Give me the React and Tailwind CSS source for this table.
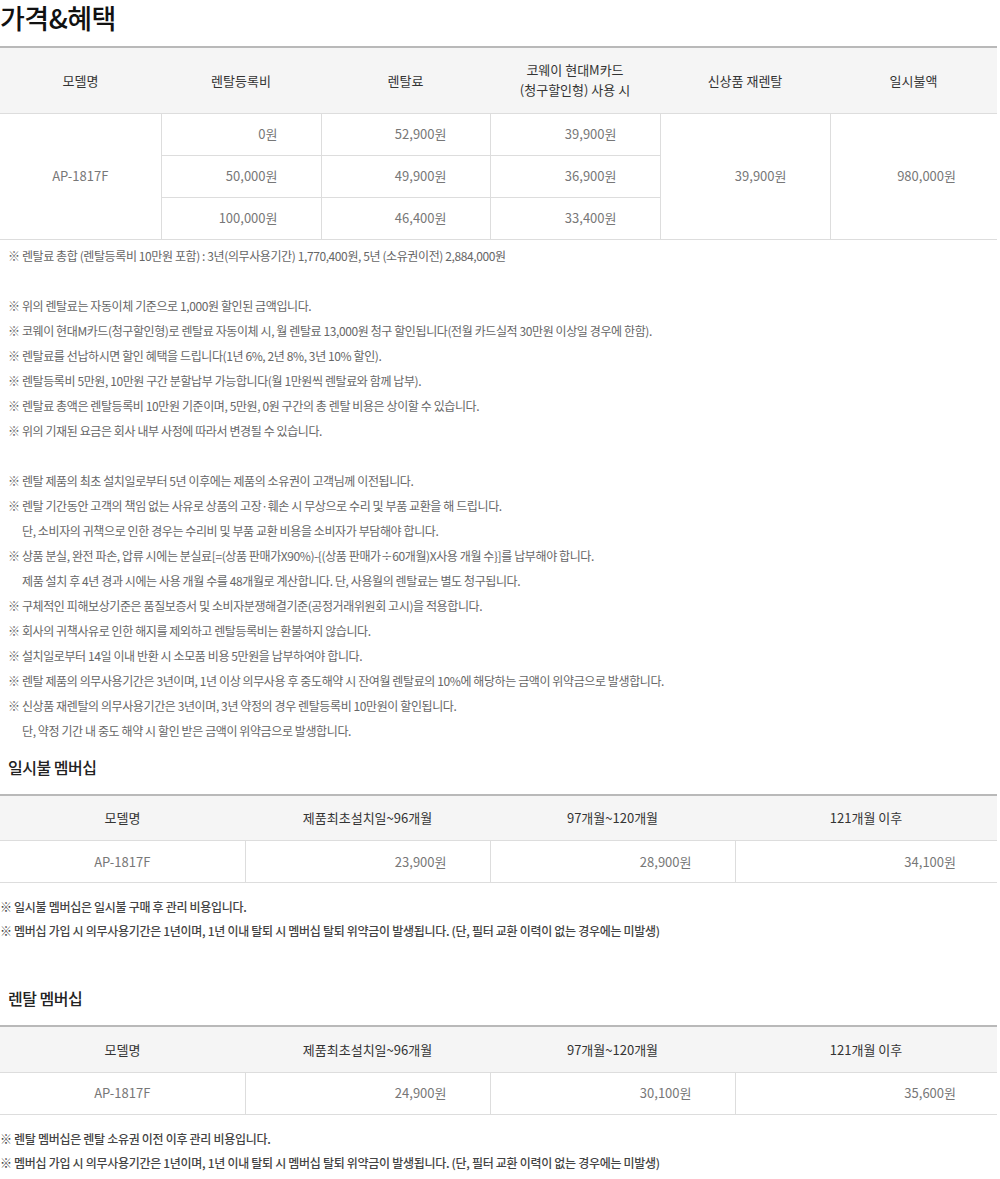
import React from "react";

const FONT = { fontFamily: '"Noto Sans CJK KR", "Noto Sans", sans-serif' };

const rentalRows = [
  { fee: "0원", rent: "52,900원", card: "39,900원" },
  { fee: "50,000원", rent: "49,900원", card: "36,900원" },
  { fee: "100,000원", rent: "46,400원", card: "33,400원" },
];

const notes = [
  "※ 렌탈료 총합 (렌탈등록비 10만원 포함) : 3년(의무사용기간) 1,770,400원, 5년 (소유권이전) 2,884,000원",
  "",
  "※ 위의 렌탈료는 자동이체 기준으로 1,000원 할인된 금액입니다.",
  "※ 코웨이 현대M카드(청구할인형)로 렌탈료 자동이체 시, 월 렌탈료 13,000원 청구 할인됩니다(전월 카드실적 30만원 이상일 경우에 한함).",
  "※ 렌탈료를 선납하시면 할인 혜택을 드립니다(1년 6%, 2년 8%, 3년 10% 할인).",
  "※ 렌탈등록비 5만원, 10만원 구간 분할납부 가능합니다(월 1만원씩 렌탈료와 함께 납부).",
  "※ 렌탈료 총액은 렌탈등록비 10만원 기준이며, 5만원, 0원 구간의 총 렌탈 비용은 상이할 수 있습니다.",
  "※ 위의 기재된 요금은 회사 내부 사정에 따라서 변경될 수 있습니다.",
  "",
  "※ 렌탈 제품의 최초 설치일로부터 5년 이후에는 제품의 소유권이 고객님께 이전됩니다.",
  "※ 렌탈 기간동안 고객의 책임 없는 사유로 상품의 고장·훼손 시 무상으로 수리 및 부품 교환을 해 드립니다.",
  "  단, 소비자의 귀책으로 인한 경우는 수리비 및 부품 교환 비용을 소비자가 부담해야 합니다.",
  "※ 상품 분실, 완전 파손, 압류 시에는 분실료[=(상품 판매가X90%)-{(상품 판매가÷60개월)X사용 개월 수}]를 납부해야 합니다.",
  "  제품 설치 후 4년 경과 시에는 사용 개월 수를 48개월로 계산합니다. 단, 사용월의 렌탈료는 별도 청구됩니다.",
  "※ 구체적인 피해보상기준은 품질보증서 및 소비자분쟁해결기준(공정거래위원회 고시)을 적용합니다.",
  "※ 회사의 귀책사유로 인한 해지를 제외하고 렌탈등록비는 환불하지 않습니다.",
  "※ 설치일로부터 14일 이내 반환 시 소모품 비용 5만원을 납부하여야 합니다.",
  "※ 렌탈 제품의 의무사용기간은 3년이며, 1년 이상 의무사용 후 중도해약 시 잔여월 렌탈료의 10%에 해당하는 금액이 위약금으로 발생합니다.",
  "※ 신상품 재렌탈의 의무사용기간은 3년이며, 3년 약정의 경우 렌탈등록비 10만원이 할인됩니다.",
  "  단, 약정 기간 내 중도 해약 시 할인 받은 금액이 위약금으로 발생합니다.",
];

const memberships = [
  {
    title: "일시불 멤버십",
    prices: ["23,900원", "28,900원", "34,100원"],
    first: "※ 일시불 멤버십은 일시불 구매 후 관리 비용입니다.",
  },
  {
    title: "렌탈 멤버십",
    prices: ["24,900원", "30,100원", "35,600원"],
    first: "※ 렌탈 멤버십은 렌탈 소유권 이전 이후 관리 비용입니다.",
  },
];

const th = "font-normal text-[13px] text-[#333] text-center";
const td = "text-[13px] text-[#777] border-[#ddd]";

// 가격 테이블
const PriceTable = () => (
  <table className="w-[997px] table-fixed border-collapse">
    <colgroup>
      <col className="w-[161px]" />
      <col className="w-[160px]" />
      <col className="w-[169px]" />
      <col className="w-[170px]" />
      <col className="w-[170px]" />
      <col className="w-[167px]" />
    </colgroup>
    <thead>
      <tr className="h-[66px] bg-[#f5f5f5] border-t-2 border-t-[#b9b9b9] border-b border-b-[#ddd]">
        <th className={th}>모델명</th>
        <th className={th}>렌탈등록비</th>
        <th className={th}>렌탈료</th>
        <th className={`${th} leading-[20px]`}>
          코웨이 현대M카드
          <br />
          (청구할인형) 사용 시
        </th>
        <th className={th}>신상품 재렌탈</th>
        <th className={th}>일시불액</th>
      </tr>
    </thead>
    <tbody>
      {rentalRows.map((row, i) => (
        <tr key={i} className="h-[42px] border-b border-[#ddd]">
          {i === 0 && (
            <td rowSpan={3} className={`${td} text-center border-r`}>
              AP-1817F
            </td>
          )}
          <td className={`${td} text-right pr-[43px] border-r`}>{row.fee}</td>
          <td className={`${td} text-right pr-[43px] border-r`}>{row.rent}</td>
          <td className={`${td} text-right pr-[43px] border-r`}>{row.card}</td>
          {i === 0 && (
            <>
              <td rowSpan={3} className={`${td} text-right pr-[43px] border-r`}>
                39,900원
              </td>
              <td rowSpan={3} className={`${td} text-right pr-[41px]`}>
                980,000원
              </td>
            </>
          )}
        </tr>
      ))}
    </tbody>
  </table>
);

const MembershipTable = ({ prices }) => (
  <table className="w-[997px] table-fixed border-collapse">
    <colgroup>
      <col className="w-[245px]" />
      <col className="w-[245px]" />
      <col className="w-[245px]" />
      <col className="w-[262px]" />
    </colgroup>
    <thead>
      <tr className="h-[46px] bg-[#f5f5f5] border-t-2 border-t-[#b9b9b9] border-b border-b-[#ddd]">
        <th className={th}>모델명</th>
        <th className={th}>제품최초설치일~96개월</th>
        <th className={th}>97개월~120개월</th>
        <th className={th}>121개월 이후</th>
      </tr>
    </thead>
    <tbody>
      <tr className="h-[42px] border-b border-[#ddd]">
        <td className={`${td} text-center border-r`}>AP-1817F</td>
        <td className={`${td} text-right pr-[43px] border-r`}>{prices[0]}</td>
        <td className={`${td} text-right pr-[43px] border-r`}>{prices[1]}</td>
        <td className={`${td} text-right pr-[41px]`}>{prices[2]}</td>
      </tr>
    </tbody>
  </table>
);

export default function App() {
  return (
    <div className="w-[1000px] bg-white pb-[10px]" style={FONT}>
      <h1 className="pt-[2px] text-[27px] leading-[32px] font-medium text-[#111] tracking-[-0.5px] mb-[12px]">
        가격&혜택
      </h1>

      <PriceTable />

      <div className="mt-[3px] pl-[8px] text-[12px] leading-[25px] text-[#666] tracking-[-0.4px]">
        {notes.map((line, i) =>
          line === "" ? (
            <div key={i} className="h-[25px]" />
          ) : line.startsWith("  ") ? (
            <p key={i} className="pl-[14px]">
              {line.trim()}
            </p>
          ) : (
            <p key={i}>{line}</p>
          )
        )}
      </div>

      {memberships.map((m, idx) => (
        <section key={m.title} className={idx === 0 ? "mt-[12px]" : "mt-[43px]"}>
          <h2 className="pl-[8px] text-[16px] leading-[24px] font-medium text-[#222] tracking-[-0.5px] mb-[15px]">
            {m.title}
          </h2>
          <MembershipTable prices={m.prices} />
          <div className="mt-[12px] text-[12px] leading-[24px] font-medium text-[#444] tracking-[-0.3px]">
            <p>{m.first}</p>
            <p>
              ※ 멤버십 가입 시 의무사용기간은 1년이며, 1년 이내 탈퇴 시 멤버십 탈퇴 위약금이 발생됩니다. (단, 필터 교환 이력이 없는 경우에는 미발생)
            </p>
          </div>
        </section>
      ))}
    </div>
  );
}
